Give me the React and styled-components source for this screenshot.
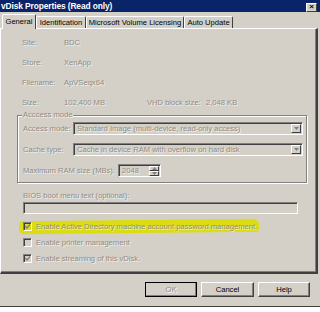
import React from 'react';
import styled, {createGlobalStyle} from 'styled-components';

const GlobalStyle = createGlobalStyle`
	html, body {
		margin: 0;
		padding: 0;
		background: #ffffff;
	}
	body {
		font-family: 'Liberation Sans', Arial, sans-serif;
		font-size: 7.6px;
	}
`;

const FACE = '#d4d0c8';
const SHADOW = '#808080';
const DARK = '#404040';
const DISABLED = '#8f8c86';

const Window = styled.div`
	display: flex;
	flex-direction: column;
	width: 320px;
	height: 307px;
	box-sizing: border-box;
	background: ${FACE};
	border-bottom: 1px solid ${DARK};
	overflow: hidden;
`;

const TitleBar = styled.div`
	display: flex;
	align-items: center;
	justify-content: space-between;
	height: 12px;
	padding: 0 3px 0 1px;
	background: #0a246a;
	color: #ffffff;
	font-weight: bold;
	font-size: 8.4px;
	letter-spacing: -0.1px;
`;

const CloseButton = styled.div`
	display: flex;
	align-items: center;
	justify-content: center;
	width: 11px;
	height: 9px;
	margin-top: 2px;
	box-sizing: border-box;
	background: ${FACE};
	border: 1px solid;
	border-color: #ffffff ${DARK} ${DARK} #ffffff;
	color: #000000;
	font-size: 8px;
	font-weight: bold;
	line-height: 1;
`;

const TabStrip = styled.div`
	display: flex;
	align-items: flex-end;
	height: 16px;
	padding-left: 2px;
	position: relative;
	z-index: 1;
`;

const Tab = styled.div`
	display: flex;
	align-items: center;
	justify-content: center;
	box-sizing: border-box;
	width: ${(p) => p.$w}px;
	height: ${(p) => (p.$active ? 15 : 12)}px;
	margin-bottom: ${(p) => (p.$active ? -1 : 0)}px;
	background: ${FACE};
	border-top: 1px solid #ffffff;
	border-left: 1px solid #ffffff;
	border-right: 1px solid ${DARK};
	border-radius: 2px 2px 0 0;
	color: #000000;
	white-space: nowrap;
	padding-bottom: ${(p) => (p.$active ? 2 : 0)}px;
`;

const Panel = styled.div`
	display: flex;
	flex-direction: column;
	box-sizing: border-box;
	width: 318px;
	height: 246px;
	padding: 3px 0 0 16px;
	border-top: 1px solid #ffffff;
	border-left: 1px solid #ffffff;
	border-right: 2px solid ${DARK};
	border-bottom: 2px solid ${DARK};
	box-shadow: inset -1px -1px 0 ${SHADOW};
`;

const InfoGrid = styled.div`
	display: grid;
	grid-template-columns: 42px 83px 59px auto;
	grid-auto-rows: 20px;
	align-items: center;
	padding-left: 5px;
	color: ${DISABLED};
	text-shadow: 1px 1px 0 rgba(255, 255, 255, 0.7);
`;

const Muted = styled.span`
	position: relative;
	color: ${DISABLED};
	text-shadow: 1px 1px 0 rgba(255, 255, 255, 0.7);
	white-space: nowrap;
`;

const Group = styled.div`
	position: relative;
	display: flex;
	flex-direction: column;
	gap: 8px;
	width: 290px;
	box-sizing: border-box;
	margin-top: 3px;
	padding: 6px 3px 5px 5px;
	border: 1px solid ${SHADOW};
	box-shadow: inset 1px 1px 0 #ffffff, 1px 1px 0 #ffffff;
`;

const Legend = styled(Muted)`
	position: absolute;
	top: -6px;
	left: 4px;
	padding: 0 1px;
	background: ${FACE};
	line-height: 10px;
`;

const FieldRow = styled.div`
	display: flex;
	align-items: center;
	height: 13px;
`;

const FieldLabel = styled(Muted)`
	width: ${(p) => p.$w}px;
	flex: none;
`;

const Sunken = styled.div`
	display: flex;
	align-items: center;
	box-sizing: border-box;
	height: ${(p) => p.$h || 13}px;
	width: ${(p) => p.$w}px;
	border: 1px solid;
	border-color: ${SHADOW} #ffffff #ffffff ${SHADOW};
	box-shadow: inset 1px 1px 0 ${DARK};
	background: ${FACE};
	padding-left: 3px;
`;

const DropButton = styled.div`
	display: flex;
	align-items: center;
	justify-content: center;
	margin-left: auto;
	width: 10px;
	height: 9px;
	margin-right: 1px;
	box-sizing: border-box;
	border: 1px solid;
	border-color: #ffffff ${DARK} ${DARK} #ffffff;
	background: ${FACE};
`;

const SpinButtons = styled.div`
	display: flex;
	flex-direction: column;
	margin-left: auto;
	margin-right: 1px;
`;

const SpinPart = styled.div`
	display: flex;
	align-items: center;
	justify-content: center;
	width: 10px;
	height: 5px;
	box-sizing: border-box;
	border: 1px solid;
	border-color: #ffffff ${DARK} ${DARK} #ffffff;
	background: ${FACE};
`;

const Arrow = ({up}) => (
	<svg width="5" height="3" viewBox="0 0 5 3">
		<path d={up ? 'M0 3 L5 3 L2.5 0 Z' : 'M0 0 L5 0 L2.5 3 Z'} fill={SHADOW} />
	</svg>
);

const BiosLabel = styled(Muted)`
	margin: 8px 0 0 6px;
	line-height: 10px;
`;

const TextBox = styled(Sunken)`
	margin: 1px 0 0 6px;
`;

const Checks = styled.div`
	display: flex;
	flex-direction: column;
	margin-top: 4px;
	padding-left: 6px;
`;

const CheckRow = styled.div`
	position: relative;
	display: flex;
	align-items: center;
	gap: 4px;
	height: 16px;

	${(p) => p.$marked && `
		&::before {
			content: '';
			position: absolute;
			left: -4px;
			top: 2px;
			width: 240px;
			height: 13px;
			background: #dcdc12;
			border-radius: 4px 6px 3px 5px;
			transform: skewY(-0.6deg);
			filter: blur(0.4px);
		}
	`}
`;

const Box = styled.div`
	position: relative;
	display: flex;
	align-items: center;
	justify-content: center;
	box-sizing: border-box;
	width: 9px;
	height: 9px;
	border: 1px solid;
	border-color: ${SHADOW} #ffffff #ffffff ${SHADOW};
	box-shadow: inset 1px 1px 0 ${DARK};
	background: transparent;
`;

const Check = () => (
	<svg width="7" height="7" viewBox="0 0 7 7">
		<path d="M1 3 L3 5 L6 1.5" stroke={SHADOW} strokeWidth="1.3" fill="none" />
	</svg>
);

const Footer = styled.div`
	display: flex;
	justify-content: flex-end;
	gap: 4px;
	padding: 8px 10px 0 0;
`;

const Button = styled.div`
	display: flex;
	align-items: center;
	justify-content: center;
	box-sizing: border-box;
	width: ${(p) => p.$w || 52}px;
	height: 15px;
	border: 1px solid;
	border-color: #ffffff ${DARK} ${DARK} #ffffff;
	box-shadow: inset -1px -1px 0 ${SHADOW};
	outline: ${(p) => (p.$default ? `1px solid #000` : 'none')};
	outline-offset: -1px;
	background: ${FACE};
	color: ${(p) => (p.$disabled ? DISABLED : '#000')};
	text-shadow: ${(p) => (p.$disabled ? '1px 1px 0 #fff' : 'none')};
`;

const tabs = [
	{label: 'General', w: 34},
	{label: 'Identification', w: 50},
	{label: 'Microsoft Volume Licensing', w: 98},
	{label: 'Auto Update', w: 49},
];

const checks = [
	{label: 'Enable Active Directory machine account password management.', on: true, marked: true},
	{label: 'Enable printer management', on: false},
	{label: 'Enable streaming of this vDisk.', on: true},
];

export default function App() {
	return (
		<>
			<GlobalStyle />
			<Window>
				<TitleBar>
					<span>vDisk Properties (Read only)</span>
					<CloseButton>×</CloseButton>
				</TitleBar>
				<TabStrip>
					{tabs.map((t, i) => (
						<Tab key={t.label} $w={t.w} $active={i === 0}>
							{t.label}
						</Tab>
					))}
				</TabStrip>
				<Panel>
					<InfoGrid>
						<span>Site:</span>
						<span>BDC</span>
						<span />
						<span />
						<span>Store:</span>
						<span>XenApp</span>
						<span />
						<span />
						<span>Filename:</span>
						<span>ApVSeqx64</span>
						<span />
						<span />
						<span>Size:</span>
						<span>102,400 MB</span>
						<span>VHD block size:</span>
						<span>2,048 KB</span>
					</InfoGrid>

					<Group>
						<Legend>Acccess mode</Legend>
						<FieldRow>
							<FieldLabel $w={50}>Access mode:</FieldLabel>
							<Sunken $w={230}>
								<Muted>Standard Image (multi-device, read-only access)</Muted>
								<DropButton><Arrow /></DropButton>
							</Sunken>
						</FieldRow>
						<FieldRow>
							<FieldLabel $w={50}>Cache type:</FieldLabel>
							<Sunken $w={230}>
								<Muted>Cache in device RAM with overflow on hard disk</Muted>
								<DropButton><Arrow /></DropButton>
							</Sunken>
						</FieldRow>
						<FieldRow>
							<FieldLabel $w={95}>Maximum RAM size (MBs):</FieldLabel>
							<Sunken $w={43}>
								<Muted>2048</Muted>
								<SpinButtons>
									<SpinPart><Arrow up /></SpinPart>
									<SpinPart><Arrow /></SpinPart>
								</SpinButtons>
							</Sunken>
						</FieldRow>
					</Group>

					<BiosLabel>BIOS boot menu text (optional):</BiosLabel>
					<TextBox $w={275} $h={12} />

					<Checks>
						{checks.map((c) => (
							<CheckRow key={c.label} $marked={c.marked}>
								<Box>{c.on && <Check />}</Box>
								<Muted>{c.label}</Muted>
							</CheckRow>
						))}
					</Checks>
				</Panel>
				<Footer>
					<Button $disabled $default>OK</Button>
					<Button $w={53}>Cancel</Button>
					<Button>Help</Button>
				</Footer>
			</Window>
		</>
	);
}
